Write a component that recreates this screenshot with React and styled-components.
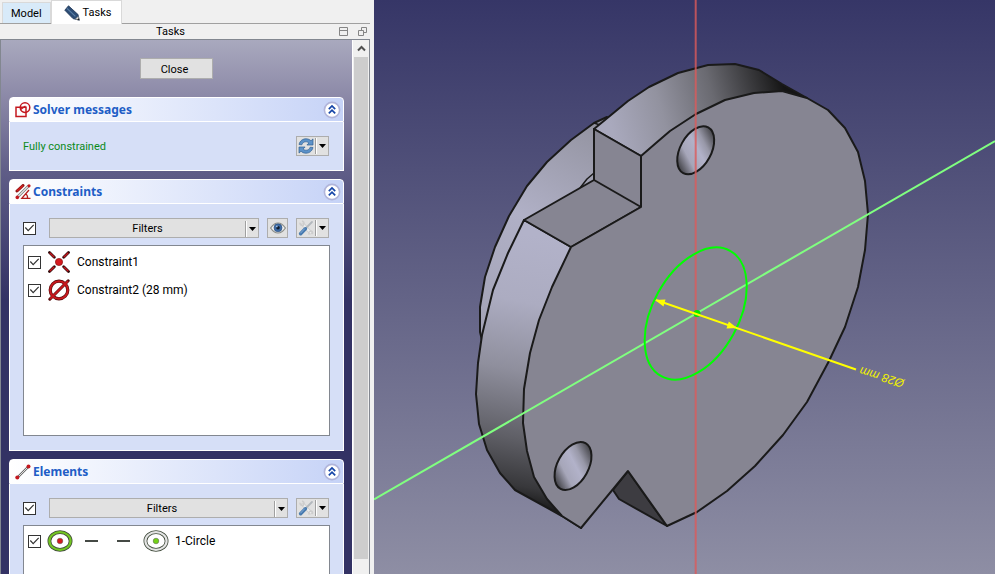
import React, { useState } from "react";
import styled, { createGlobalStyle } from "styled-components";

const GlobalStyle = createGlobalStyle`
  * {
    box-sizing: border-box;
  }

  body {
    margin: 0;
    background: #f0f0f0;
    color: #000;
    font-family: Roboto, "Noto Sans", sans-serif;
    font-size: 11px;
    line-height: 16px;
  }

  button,
  input {
    font: inherit;
    color: inherit;
    margin: 0;
  }

  svg {
    display: block;
    flex: none;
  }
`;

const PencilIcon = () => (
  <svg width="16" height="16" viewBox="0 0 16 16" aria-hidden="true">
    <path d="M4.5 .8 L14 9.5 L15.3 15.2 L9 13.6 L.8 5.2 Z" fill="#2c4c74" stroke="#1d3556" strokeWidth=".8" />
    <path d="M3 3.4 L11.4 11.4" stroke="#5b7fa6" strokeWidth="1.2" />
    <path d="M11.4 14 L14.2 11.4 L15.3 15.2 Z" fill="#e6e3da" stroke="#888" strokeWidth=".5" />
    <path d="M13 14.6 L14.8 13.2 L15.4 15.3 Z" fill="#111" />
  </svg>
);

const FloatIcon = () => (
  <svg width="9" height="9" viewBox="0 0 9 9" fill="none" stroke="#858585" aria-hidden="true">
    <path d="M.5 .5h8v8h-8z M.5 3.5h8" />
  </svg>
);

const RestoreIcon = () => (
  <svg width="9" height="9" viewBox="0 0 9 9" fill="none" stroke="#858585" aria-hidden="true">
    <path d="M3.5 3V.5h5v5H6 M.5 3.5h5v5h-5z" />
  </svg>
);

const SolverIcon = () => (
  <svg width="16" height="16" viewBox="0 0 16 16" fill="none" stroke="#c4181f" strokeWidth="1.5" aria-hidden="true">
    <path d="M1 5.2h10v9.3H1z" />
    <circle cx="10" cy="5.6" r="4.8" />
    <path d="M5.5 7.5 L10.5 4" />
  </svg>
);

const ConstraintsIcon = () => (
  <svg width="16" height="16" viewBox="0 0 16 16" fill="none" aria-hidden="true">
    <path d="M2 7 L8 1.5" stroke="#8d1515" strokeWidth="3" strokeLinecap="round" />
    <path d="M2 7 L8 1.5" stroke="#d32020" strokeWidth="1.5" />
    <path d="M3 12.5 L13.5 2" stroke="#777" strokeWidth="2.6" />
    <path d="M3 12.5 L13.5 2" stroke="#e4e4e4" strokeWidth="1.2" />
    <circle cx="2.3" cy="13.4" r="1.8" fill="#c4181f" />
    <circle cx="14" cy="1.8" r="1.6" fill="#c4181f" />
    <path d="M14 6 L6.8 14.3 H15.5 M10.5 10 Q13 11 12.5 14.5" stroke="#b51d1d" strokeWidth="1.3" />
  </svg>
);

const ElementsIcon = () => (
  <svg width="16" height="16" viewBox="0 0 16 16" aria-hidden="true">
    <path d="M2.5 13.5 L13.5 2.5" stroke="#666" strokeWidth="2.4" />
    <path d="M2.5 13.5 L13.5 2.5" stroke="#ddd" strokeWidth="1" />
    <circle cx="2.3" cy="13.5" r="2" fill="#c4181f" />
    <circle cx="13.5" cy="2.4" r="2" fill="#c4181f" />
  </svg>
);

const CollapseIcon = () => (
  <svg width="18" height="18" viewBox="0 0 18 18" aria-hidden="true">
    <circle cx="9" cy="9" r="7.6" fill="#fff" stroke="#b1b5da" strokeWidth="1.6" />
    <path d="M5.8 8.2 L9 5 L12.2 8.2 M5.8 12.4 L9 9.2 L12.2 12.4" fill="none" stroke="#1646a8" strokeWidth="1.7" />
  </svg>
);

const SyncIcon = () => (
  <svg width="16" height="16" viewBox="0 0 16 16" fill="#5c92c9" stroke="#2f5f93" strokeWidth=".7" aria-hidden="true">
    <path d="M1 6.5 C2 2.5 5 .8 8 .8 C10.3 .8 11.7 1.6 13 2.8 L15 .9 V7 H8.9 L10.9 5 C9.8 4 8.8 3.7 7.6 3.8 C5.7 3.9 4.6 5 3.8 6.8 Z" />
    <path d="M15 9.5 C14 13.5 11 15.2 8 15.2 C5.7 15.2 4.3 14.4 3 13.2 L1 15.1 V9 H7.1 L5.1 11 C6.2 12 7.2 12.3 8.4 12.2 C10.3 12.1 11.4 11 12.2 9.2 Z" />
  </svg>
);

const EyeIcon = () => (
  <svg width="16" height="12" viewBox="0 0 16 12" aria-hidden="true">
    <path d="M.6 6 Q4 1 8 1 Q12 1 15.4 6 Q12 11 8 11 Q4 11 .6 6 Z" fill="#efefef" stroke="#8a8d88" strokeWidth="1.2" />
    <circle cx="8" cy="5.8" r="4" fill="#3c6ba5" stroke="#284a78" strokeWidth=".6" />
    <circle cx="8" cy="5.8" r="1.8" fill="#101c2e" />
    <circle cx="6.8" cy="4.4" r=".9" fill="#9fbde0" />
  </svg>
);

const ToolsIcon = () => (
  <svg width="16" height="16" viewBox="0 0 16 16" fill="none" strokeLinecap="round" aria-hidden="true">
    <path d="M5 4.5 L12.5 12.5" stroke="#c6c6c6" strokeWidth="3.4" />
    <path d="M5 4.5 L12.5 12.5" stroke="#ececec" strokeWidth="2.2" />
    <path d="M2 3.2 Q2.5 6 5.2 5.2 Q7 2.6 4.6 1.2" stroke="#cdcdcd" strokeWidth="1.6" />
    <path d="M11 14.2 Q10.4 11.4 13 11 Q15 11.6 14.5 13.6" stroke="#cdcdcd" strokeWidth="1.4" />
    <path d="M8 8 L14 2" stroke="#b3b8bd" strokeWidth="1.8" />
    <path d="M2.6 13.8 L7.4 8.8" stroke="#4679ae" strokeWidth="3.4" />
    <path d="M2.6 13 L6.6 8.8" stroke="#86aeda" strokeWidth="1" />
  </svg>
);

const CoincidentIcon = () => (
  <svg width="22" height="22" viewBox="0 0 22 22" aria-hidden="true">
    <g stroke="#2a0808" strokeWidth="2.8" strokeLinecap="round">
      <path d="M1.5 1.5 L6.3 6.3 M20.5 1.5 L15.7 6.3 M1.5 20.5 L6.3 15.7 M20.5 20.5 L15.7 15.7" />
    </g>
    <g stroke="#c4181f" strokeWidth="1.5">
      <path d="M1.7 1.7 L6.3 6.3 M20.3 1.7 L15.7 6.3 M1.7 20.3 L6.3 15.7 M20.3 20.3 L15.7 15.7" />
    </g>
    <circle cx="11" cy="11" r="3.6" fill="#d5191e" stroke="#8d1212" strokeWidth=".7" />
  </svg>
);

const DiameterIcon = () => (
  <svg width="22" height="22" viewBox="0 0 22 22" fill="none" aria-hidden="true">
    <circle cx="11" cy="11" r="8.8" stroke="#4f0a0a" strokeWidth="3.2" />
    <path d="M1.8 20.2 L20.2 1.8" stroke="#4f0a0a" strokeWidth="3" strokeLinecap="round" />
    <circle cx="11" cy="11" r="8.8" stroke="#c8191e" strokeWidth="2" />
    <path d="M2 20 L20 2" stroke="#c8191e" strokeWidth="1.8" />
  </svg>
);

const CircleIcon = ({ ring, dot }) => (
  <svg width="26" height="22" viewBox="0 0 26 22" fill="none" aria-hidden="true">
    <ellipse cx="13" cy="11" rx="10.6" ry="8.8" stroke="#3f4a3a" strokeWidth="3.8" />
    <ellipse cx="13" cy="11" rx="10.6" ry="8.8" stroke={ring} strokeWidth="2.2" />
    <circle cx="13" cy="11" r="2.8" fill={dot} stroke="#555" strokeWidth=".5" />
  </svg>
);

const DashIcon = () => (
  <svg width="26" height="22" viewBox="0 0 26 22" aria-hidden="true">
    <path d="M6 11 H19" stroke="#454a45" strokeWidth="2" />
  </svg>
);

const ArrowIcon = () => (
  <svg width="7" height="4" viewBox="0 0 7 4" aria-hidden="true">
    <path d="M0 0 H7 L3.5 4 Z" fill="#000" />
  </svg>
);

const ScrollUpIcon = () => (
  <svg width="9" height="7" viewBox="0 0 9 7" aria-hidden="true">
    <path d="M1 5.5 L4.5 2 L8 5.5" fill="none" stroke="#505050" strokeWidth="2" />
  </svg>
);

const Split = ({ label, children, grow }) => (
  <SplitButton aria-label={label} aria-haspopup="menu" $grow={grow}>
    <SplitFace>{children}</SplitFace>
    <SplitArrow>
      <ArrowIcon />
    </SplitArrow>
  </SplitButton>
);

const TaskBox = ({ icon, title, children }) => {
  const [open, setOpen] = useState(true);
  return (
    <Box>
      <BoxHeader>
        {icon}
        <BoxTitle>{title}</BoxTitle>
        <Collapse aria-label={`Toggle ${title}`} aria-expanded={open} onClick={() => setOpen(!open)}>
          <CollapseIcon />
        </Collapse>
      </BoxHeader>
      {open && <BoxBody>{children}</BoxBody>}
    </Box>
  );
};

const Part = () => (
  <Scene viewBox="374 0 621 574" preserveAspectRatio="xMidYMid slice" role="img" aria-label="3D view">
    <defs>
      <linearGradient id="rim" gradientUnits="userSpaceOnUse" x1="560" y1="240" x2="510" y2="506">
        <stop offset="0" stopColor="#b2b2c9" />
        <stop offset=".25" stopColor="#acacc1" />
        <stop offset=".5" stopColor="#8f8f9d" />
        <stop offset=".75" stopColor="#5f5f66" />
        <stop offset=".92" stopColor="#38383b" />
        <stop offset="1" stopColor="#161616" />
      </linearGradient>
      <linearGradient id="top" gradientUnits="userSpaceOnUse" x1="615" y1="140" x2="785" y2="92">
        <stop offset="0" stopColor="#a9a9bd" />
        <stop offset=".3" stopColor="#92929f" />
        <stop offset=".6" stopColor="#6a6a71" />
        <stop offset=".9" stopColor="#2b2b2d" />
        <stop offset="1" stopColor="#151515" />
      </linearGradient>
      <linearGradient id="back" gradientUnits="userSpaceOnUse" x1="600" y1="120" x2="480" y2="330">
        <stop offset="0" stopColor="#92929f" />
        <stop offset=".5" stopColor="#b0b0c6" />
        <stop offset="1" stopColor="#a3a3b6" />
      </linearGradient>
      <linearGradient id="hole" x1=".7" y1="0" x2=".3" y2="1">
        <stop offset="0" stopColor="#39393c" />
        <stop offset=".28" stopColor="#9898a8" />
        <stop offset=".45" stopColor="#b2b2c9" />
        <stop offset=".7" stopColor="#a6a6b9" />
        <stop offset="1" stopColor="#333336" />
      </linearGradient>
    </defs>
    <g stroke="#1a1a1a" strokeWidth="2" strokeLinejoin="round">
      <path
        fill="url(#back)"
        d="M607 117 L594 123 L571 140 L547 162 L527 186 L509 216 L495 247 L485 277 L480 307 L480 332 L482 340 L560 300 L600 200 Z"
      />
      <path fill="none" d="M594 123 L600 125 M594 173 L587 179 L580 188" strokeWidth="1.5" />
      <path
        fill="url(#top)"
        d="M594 129 L628 101 L649 87 L678 73 L708 65 L735 64 L759 70 L782 84 L807 98 L780 150 L641 156 Z"
      />
      <path
        fill="url(#rim)"
        d="M524 220 L508 253 L493 290 L482 335 L478 363 L476 394 L479 424 L487 450 L500 473 L515 490 L562 516 L581 528 L600 440 L571 247 Z"
      />
      <path fill="#868592" d="M594 129 L641 156 V207 L571 247 L524 220 L594 180 Z" />
      <path fill="none" d="M594 180 L641 207" />
      <path fill="#3d3c41" d="M628 471 L667 526 L619 499 L613 490 Z" />
      <path
        fill="#868592"
        d="M641 156 L656 143 L670 131 L696 114 L725 100 L754 93 L782 91 L807 98 L828 110 L845 128 L858 152 L865 181 L868 214 L865 250 L858 287 L845 327 L829 361 L807 402 L783 435 L755 466 L727 491 L697 512 L667 526 L628 471 L581 528 L562 516 L547 499 L534 477 L527 451 L523 423 L524 389 L530 353 L539 320 L552 287 L571 247 L641 207 Z"
      />
      <ellipse cx="695.7" cy="150.3" rx="15.5" ry="26" transform="rotate(28.7 695.7 150.3)" fill="url(#hole)" />
      <ellipse cx="573" cy="466" rx="15.5" ry="26" transform="rotate(28.7 573 466)" fill="url(#hole)" />
    </g>
    <path d="M374 499.5 L995 141" stroke="#80ff80" strokeWidth="2" />
    <path d="M695.7 0 V574" stroke="#dc5a5a" strokeOpacity=".8" strokeWidth="2" />
    <ellipse
      cx="695.7"
      cy="313.5"
      rx="43"
      ry="71.5"
      transform="rotate(28.75 695.7 313.5)"
      fill="none"
      stroke="#00ff00"
      strokeWidth="2"
    />
    <circle cx="697" cy="313.5" r="3.5" fill="#00e600" />
    <path d="M656 300 L856 369.5" stroke="#ffff00" strokeWidth="2" />
    <path d="M655 300 L665.5 299.5 L663.5 306.5 Z M737 328 L726.5 328.5 L728.8 321.5 Z" fill="#ffff00" />
    <Dimension transform="translate(905 380) rotate(197)">Ø28 mm</Dimension>
  </Scene>
);

const App = () => (
  <Window>
    <GlobalStyle />
    <Dock>
      <Tabs role="tablist">
        <Tab role="tab" aria-selected="false">
          Model
        </Tab>
        <Tab role="tab" aria-selected="true">
          <PencilIcon />
          Tasks
        </Tab>
      </Tabs>
      <TitleBar>
        <Title>Tasks</Title>
        <TitleButton aria-label="Dock">
          <FloatIcon />
        </TitleButton>
        <TitleButton aria-label="Float">
          <RestoreIcon />
        </TitleButton>
      </TitleBar>
      <Frame>
        <TaskList>
          <CloseButton>Close</CloseButton>
          <TaskBox icon={<SolverIcon />} title="Solver messages">
            <Row>
              <Status>Fully constrained</Status>
              <Split label="Update">
                <SyncIcon />
              </Split>
            </Row>
          </TaskBox>
          <TaskBox icon={<ConstraintsIcon />} title="Constraints">
            <Row>
              <FilterCheck type="checkbox" defaultChecked aria-label="Filter constraints" />
              <Split grow>Filters</Split>
              <IconButton aria-label="Show or hide constraints">
                <EyeIcon />
              </IconButton>
              <Split label="Constraint settings">
                <ToolsIcon />
              </Split>
            </Row>
            <List>
              <Item>
                <Check type="checkbox" defaultChecked />
                <CoincidentIcon />
                Constraint1
              </Item>
              <Item>
                <Check type="checkbox" defaultChecked />
                <DiameterIcon />
                Constraint2 (28 mm)
              </Item>
            </List>
          </TaskBox>
          <TaskBox icon={<ElementsIcon />} title="Elements">
            <Row>
              <FilterCheck type="checkbox" defaultChecked aria-label="Filter elements" />
              <Split grow>Filters</Split>
              <Split label="Element settings">
                <ToolsIcon />
              </Split>
            </Row>
            <List>
              <Item $dense>
                <Check type="checkbox" defaultChecked />
                <CircleIcon ring="#73c622" dot="#d5191e" />
                <DashIcon />
                <DashIcon />
                <CircleIcon ring="#e4e4e4" dot="#73d216" />
                1-Circle
              </Item>
            </List>
          </TaskBox>
        </TaskList>
        <ScrollBar>
          <ScrollButton aria-label="Scroll up">
            <ScrollUpIcon />
          </ScrollButton>
          <ScrollThumb />
        </ScrollBar>
      </Frame>
    </Dock>
    <View>
      <Part />
    </View>
  </Window>
);

export default App;

const Window = styled.div`
  display: flex;
  height: 100vh;
  overflow: hidden;
`;

const Dock = styled.aside`
  display: flex;
  flex-direction: column;
  flex: 0 0 370px;
  margin-right: 4px;
`;

const Tabs = styled.div`
  display: flex;
  align-items: flex-end;
  height: 24px;
  padding-left: 2px;
  border-bottom: 1px solid #a0a0a0;
`;

const Tab = styled.button`
  display: flex;
  align-items: center;
  gap: 3px;
  height: 21px;
  padding: 2px 8px 0;
  border: 1px solid #d9d9d9;
  border-bottom: 0;
  background: #d8eaf9;

  &[aria-selected="true"] {
    height: 24px;
    margin-bottom: -1px;
    padding: 0 10px 0 12px;
    background: #fff;
  }
`;

const TitleBar = styled.div`
  display: flex;
  align-items: center;
  gap: 10px;
  height: 15px;
  padding: 0 3px 0 12px;
`;

const Title = styled.div`
  flex: 1;
  text-align: center;
`;

const TitleButton = styled.button`
  padding: 0;
  border: 0;
  background: none;
`;

const Frame = styled.div`
  display: flex;
  flex: 1;
  min-height: 0;
  border: 1px solid #828790;
  border-bottom: 0;
`;

const TaskList = styled.div`
  display: flex;
  flex: 1;
  flex-direction: column;
  gap: 8px;
  min-width: 0;
  padding: 18px 8px 0;
  overflow: hidden;
  background: linear-gradient(#a9a9be, #8a87a6 60px, #5f5d87 132px, #333264 260px);
`;

const CloseButton = styled.button`
  align-self: center;
  flex: none;
  width: 73px;
  height: 21px;
  margin-bottom: 10px;
  padding: 2px 4px 0 0;
  border: 1px solid #adadad;
  background: #e1e1e1;
`;

const Box = styled.section`
  flex: none;
`;

const BoxHeader = styled.header`
  display: flex;
  align-items: center;
  gap: 2px;
  height: 25px;
  padding: 0 2px 0 5px;
  border: 1px solid #fff;
  border-radius: 4px 4px 0 0;
  background: linear-gradient(90deg, #fff, #c6d3f7);
`;

const BoxTitle = styled.h2`
  flex: 1;
  margin: 0;
  color: #215dc6;
  font-family: "Noto Sans", sans-serif;
  font-size: 12px;
  line-height: 16px;
`;

const Collapse = styled.button`
  padding: 0;
  border: 0;
  background: none;
`;

const BoxBody = styled.div`
  display: flex;
  flex-direction: column;
  gap: 7px;
  padding: 14px 13px;
  border: 1px solid #fff;
  border-top: 0;
  background: #d6dff7;
`;

const Row = styled.div`
  display: flex;
  align-items: center;
  gap: 8px;
  padding-right: 1px;
`;

const Status = styled.div`
  flex: 1;
  padding-top: 2px;
  color: #0a8a1a;
`;

const SplitButton = styled.button`
  display: flex;
  align-items: center;
  flex: ${p => (p.$grow ? "1" : "none")};
  height: 20px;
  padding: ${p => (p.$grow ? "1px 0 0" : "0")};
  border: 1px solid #adadad;
  background: #e1e1e1;
`;

const SplitFace = styled.span`
  display: flex;
  flex: 1;
  justify-content: center;
  padding: 0 1px;
`;

const SplitArrow = styled.span`
  display: flex;
  align-items: center;
  height: 16px;
  padding: 0 2px 0 3px;
  border-left: 1px solid #a0a0a0;
  box-shadow: inset 1px 0 #fff;
`;

const IconButton = styled.button`
  display: flex;
  align-items: center;
  justify-content: center;
  width: 21px;
  height: 20px;
  padding: 0;
  border: 1px solid #adadad;
  background: #e1e1e1;
`;

const Check = styled.input`
  appearance: none;
  flex: none;
  width: 13px;
  height: 13px;
  border: 1px solid #333;
  background: #fff;

  &:checked::after {
    content: "";
    display: block;
    width: 11px;
    height: 11px;
    background: #333;
    clip-path: polygon(8% 50%, 16% 42%, 38% 66%, 84% 18%, 92% 26%, 38% 82%);
  }
`;

const FilterCheck = styled(Check)`
  margin-right: 5px;
`;

const List = styled.div`
  height: 191px;
  padding: 2px 4px;
  border: 1px solid #828790;
  background: #fff;
`;

const Item = styled.label`
  display: flex;
  align-items: center;
  gap: ${p => (p.$dense ? "6px" : "7px")};
  height: ${p => (p.$dense ? "26px" : "28px")};
  font-size: 12px;
`;

const ScrollBar = styled.div`
  display: flex;
  flex-direction: column;
  width: 17px;
  padding: 0 1px 15px;
  border-left: 1px solid #fff;
  background: #f0f0f0;
`;

const ScrollButton = styled.button`
  display: flex;
  align-items: center;
  justify-content: center;
  height: 17px;
  padding: 0;
  border: 0;
  background: none;
`;

const ScrollThumb = styled.div`
  flex: 1;
  background: #cdcdcd;
`;

const View = styled.main`
  flex: 1;
  min-width: 0;
  background: linear-gradient(#363667, #8e8ea4);
`;

const Scene = styled.svg`
  width: 100%;
  height: 100%;
`;

const Dimension = styled.text`
  fill: #f0f000;
  font-family: "Liberation Sans", Arial, sans-serif;
  font-size: 12px;
  font-style: italic;
`;
